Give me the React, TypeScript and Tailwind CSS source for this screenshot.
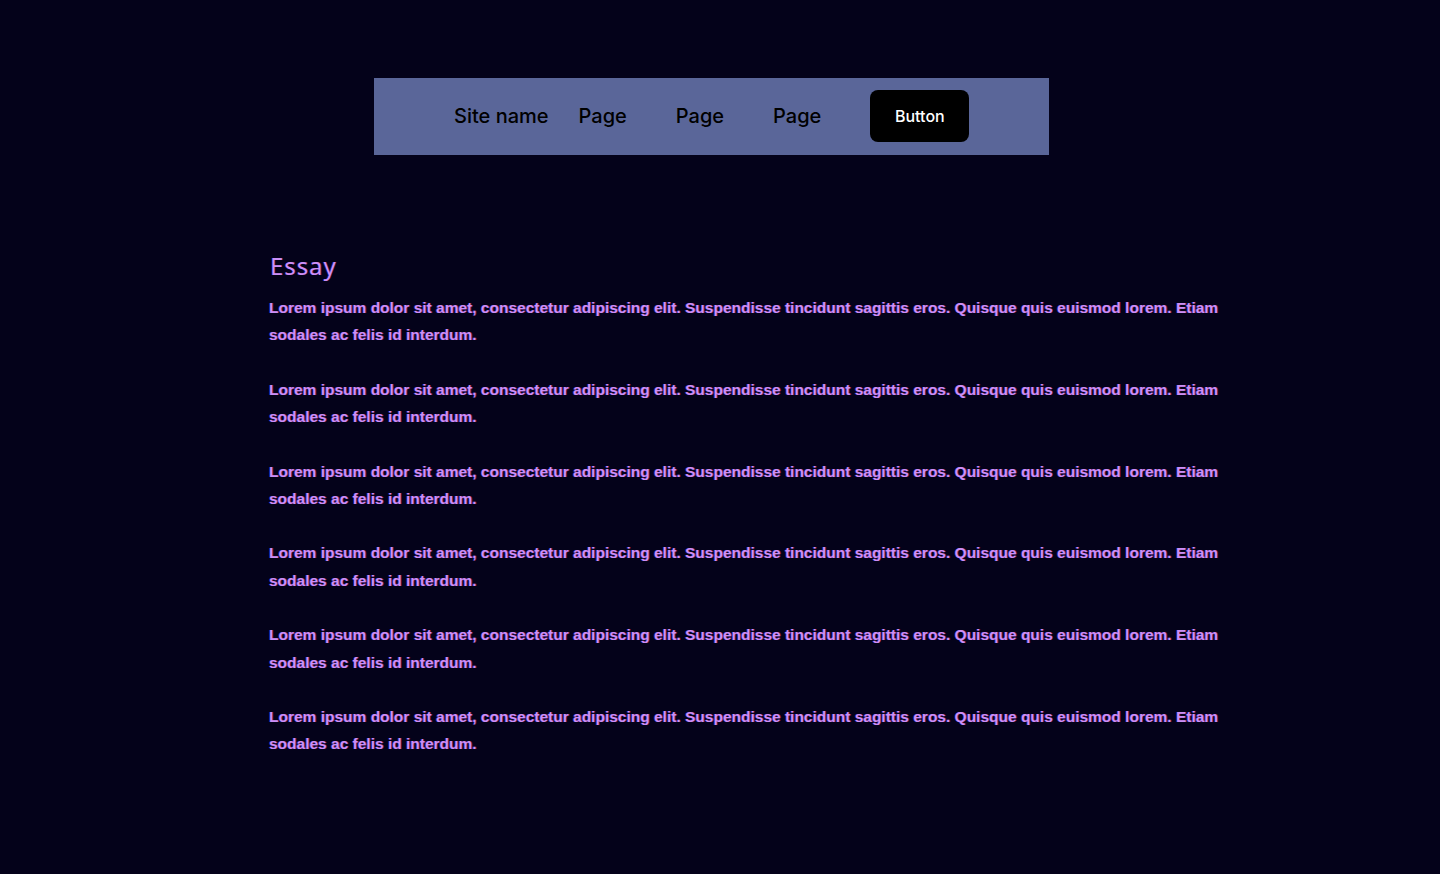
import React from "react";

const para =
  "Lorem ipsum dolor sit amet, consectetur adipiscing elit. Suspendisse tincidunt sagittis eros. Quisque quis euismod lorem. Etiam sodales ac felis id interdum.";

export default function App() {
  return (
    <div className="min-h-[874px] w-full bg-[#04021a] pt-[78px]">
      <nav
        className="ml-[374px] flex h-[77px] w-[675px] items-center bg-[#5a6699] pb-[2px] pl-[80px] text-[20px] text-black"
        style={{ fontFamily: "Inter, 'Noto Sans', sans-serif" }}
      >
        <span className="mr-[30px] font-[450]">Site name</span>
        <span className="mr-[49px] font-[450]">Page</span>
        <span className="mr-[49px] font-[450]">Page</span>
        <span className="mr-[49px] font-[450]">Page</span>
        <button className="flex h-[52px] w-[99px] items-center justify-center rounded-[8px] bg-black text-[16px] font-[450] text-white">
          Button
        </button>
      </nav>
      <main className="ml-[269px] mt-[96px] w-[990px] text-[#cb8ff7]">
        <h1
          className="mb-[13px] ml-[1px] text-[24px] font-normal leading-[30px] [text-shadow:0.6px_0_#ff3c6e60,-0.6px_0_#3c50ff60]"
          style={{ fontFamily: "'Noto Sans', sans-serif", letterSpacing: "0.9px" }}
        >
          Essay
        </h1>
        {Array.from({ length: 6 }).map((_, i) => (
          <p
            key={i}
            className="mb-[27px] text-[15.5px] font-bold leading-[27.4px] [text-shadow:0.7px_0_#ff3c6e70,-0.7px_0_#3c50ff70]"
            style={{ fontFamily: "'Liberation Sans', Arial, sans-serif" }}
          >
            {para}
          </p>
        ))}
      </main>
    </div>
  );
}
